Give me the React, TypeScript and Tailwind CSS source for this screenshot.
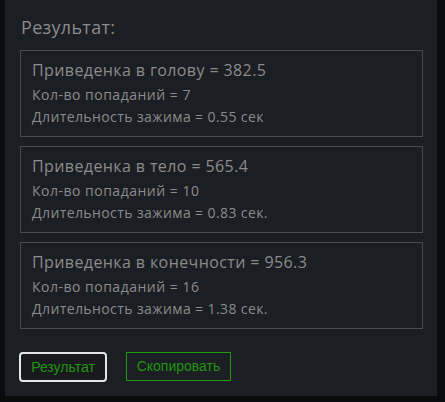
import React from "react";

const boxes = [
  { title: "Приведенка в голову = 382.5", hits: "Кол-во попаданий = 7", dur: "Длительность зажима = 0.55 сек" },
  { title: "Приведенка в тело = 565.4", hits: "Кол-во попаданий = 10", dur: "Длительность зажима = 0.83 сек." },
  { title: "Приведенка в конечности = 956.3", hits: "Кол-во попаданий = 16", dur: "Длительность зажима = 1.38 сек." },
];

export default function App() {
  return (
    <div className="w-[445px] h-[402px] bg-[#0a0b0d] pl-[5px] overflow-hidden">
      <div
        className="w-[432px] h-[396px] bg-[#1b1e23] pl-[15px] pr-[14px] pt-[14px] text-[#8b8b8b]"
        style={{ fontFamily: '"Open Sans", "Noto Sans", sans-serif' }}
      >
        <h2 className="text-[18px] leading-[26px] font-normal ml-[1px] tracking-[0.3px]">Результат:</h2>
        <div className="mt-[10px] flex flex-col gap-[9px]">
          {boxes.map((b) => (
            <div key={b.title} className="h-[87px] border border-[#4a4a4a] pl-[11px] pt-[7px]">
              <div className="text-[16px] leading-[24px] tracking-[0.4px]">{b.title}</div>
              <div className="text-[14px] leading-[22px] mt-[2px] tracking-[0.5px]">{b.hits}</div>
              <div className="text-[14px] leading-[22px] tracking-[0.4px]">{b.dur}</div>
            </div>
          ))}
        </div>
        <div className="mt-[23px] ml-[-1px] flex gap-[19px]" style={{ fontFamily: '"Liberation Sans", Arial, sans-serif' }}>
          <button className="w-[88px] h-[30px] rounded-[4px] border-2 border-[#e6e6e6] bg-[#181a1e] text-[#20960f] text-[14px]">
            Результат
          </button>
          <button className="w-[105px] h-[29px] border border-[#1f9a10] text-[#20960f] text-[14px]">
            Скопировать
          </button>
        </div>
      </div>
    </div>
  );
}
